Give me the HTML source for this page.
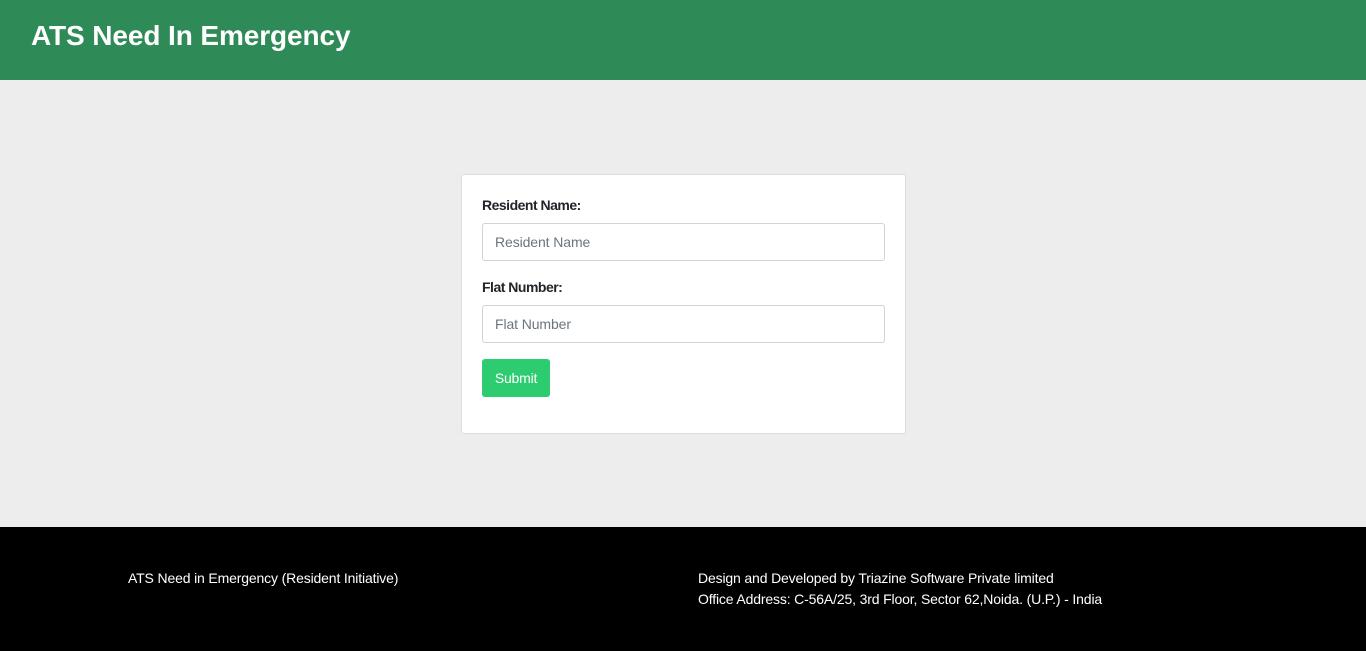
<!DOCTYPE html>
<html><head><meta charset="utf-8"><style>
*{box-sizing:border-box;margin:0;padding:0}
body{width:1366px;height:651px;overflow:hidden;background:#ededed;font-family:"Liberation Sans",Arial,sans-serif;position:relative}
.hdr{position:absolute;left:0;top:0;width:1366px;height:80px;background:#2e8b57}
.hdr h1{position:absolute;left:31px;top:19px;font-size:28px;font-weight:bold;color:#fff;line-height:34px;letter-spacing:-0.1px}
.card{position:absolute;left:461px;top:174px;width:445px;height:260px;background:#fff;border:1px solid #ddd;border-radius:3px}
label{position:absolute;left:20px;font-size:14px;color:#212529;font-weight:bold;letter-spacing:-0.5px;-webkit-text-stroke:0}
.inp{position:absolute;left:20px;width:403px;height:38px;border:1px solid #ced4da;border-radius:3px;font-size:14px;color:#6c757d;padding:0 12px;line-height:36px;letter-spacing:-0.1px}
.btn{position:absolute;left:20px;top:184px;width:68px;height:38px;background:#2ecc71;border-radius:3px;color:#fff;font-size:14px;text-align:center;line-height:38px;letter-spacing:-0.2px}
.ftr{position:absolute;left:0;top:527px;width:1366px;height:124px;background:#000;color:#fff;font-size:14px;line-height:21px;letter-spacing:-0.15px}
</style></head><body>
<div class="hdr"><h1>ATS Need In Emergency</h1></div>
<div class="card">
<label style="top:22px">Resident Name:</label>
<div class="inp" style="top:48px">Resident Name</div>
<label style="top:104px">Flat Number:</label>
<div class="inp" style="top:130px">Flat Number</div>
<div class="btn">Submit</div>
</div>
<div class="ftr">
<div style="position:absolute;left:128px;top:41px">ATS Need in Emergency (Resident Initiative)</div>
<div style="position:absolute;left:698px;top:41px">Design and Developed by Triazine Software Private limited<br>Office Address: C-56A/25, 3rd Floor, Sector 62,Noida. (U.P.) - India</div>
</div>
</body></html>
